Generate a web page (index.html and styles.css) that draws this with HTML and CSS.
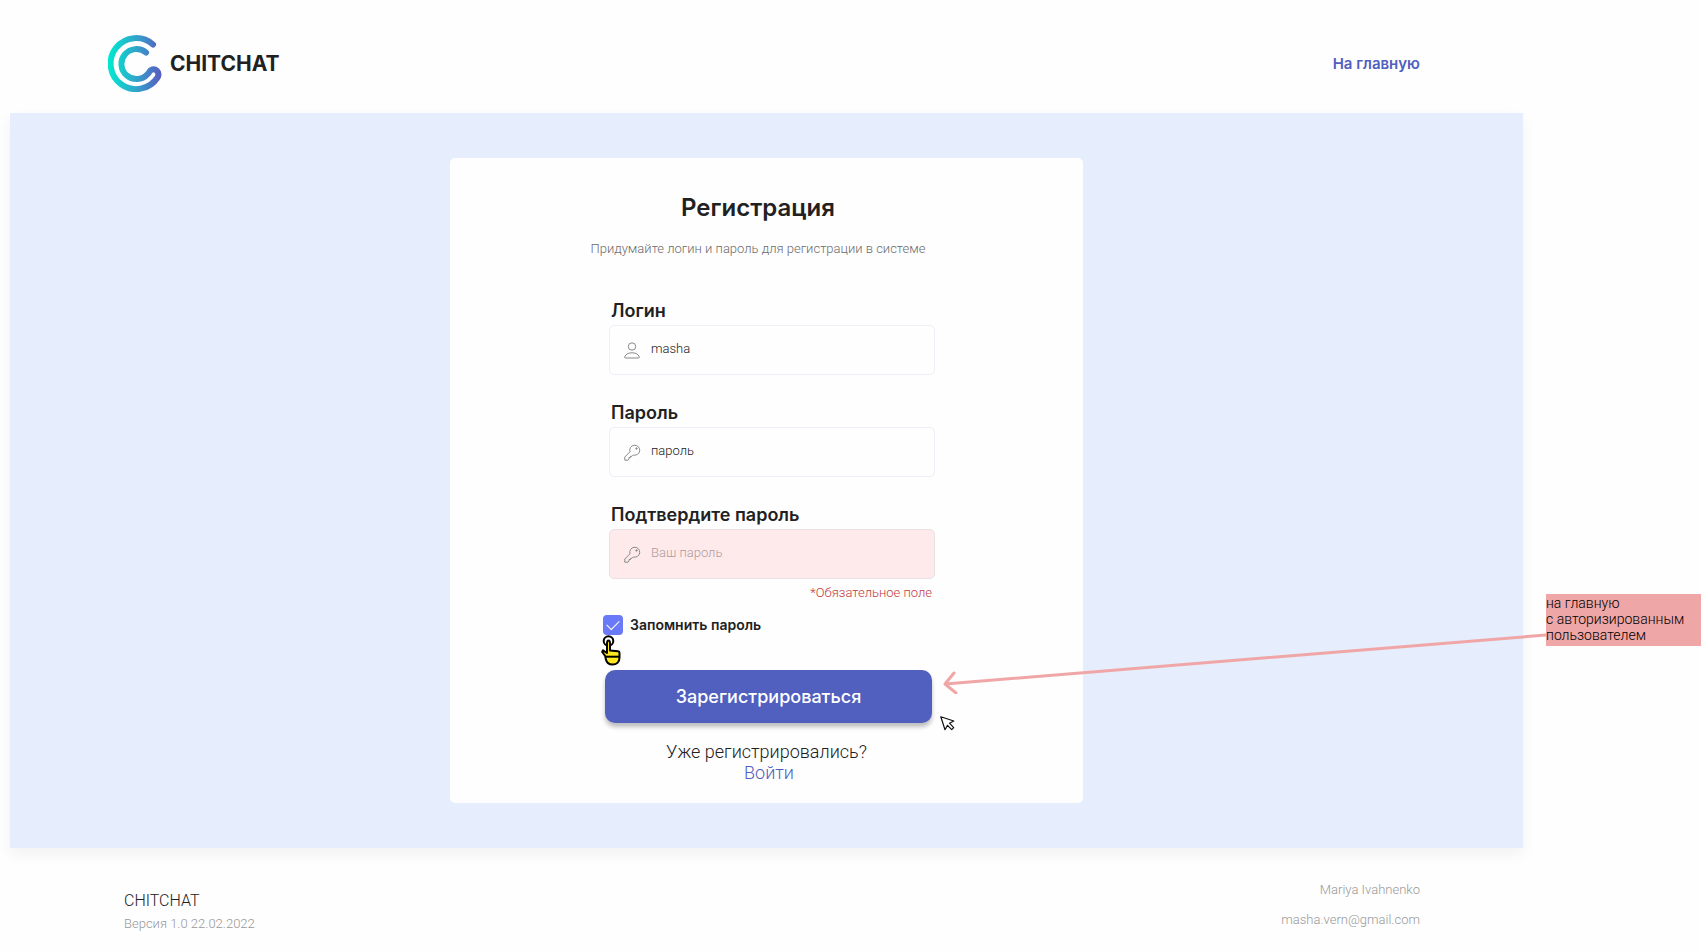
FILE: index.html
```
<!DOCTYPE html>
<html lang="ru">
<head>
<meta charset="utf-8">
<meta name="viewport" content="width=device-width, initial-scale=1">
<title>CHITCHAT — Регистрация</title>
<link rel="stylesheet" href="styles.css">
</head>
<body>
<div class="page">
  <header class="header">
    <div class="brand">
      <svg class="brand-logo" width="54" height="57" viewBox="0 0 54 57" fill="none" aria-hidden="true">
        <defs>
          <linearGradient id="logo-gradient" gradientUnits="userSpaceOnUse" x1="0" y1="28" x2="54" y2="28">
            <stop offset="0" stop-color="#00ead0"/>
            <stop offset="0.5" stop-color="#2fa8cb"/>
            <stop offset="1" stop-color="#5a58c0"/>
          </linearGradient>
        </defs>
        <path d="M45 9.500A25.500 25.500 0 1 0 49.500 42.500C52.500 37 47 32.500 42.800 35.200C41.500 36.200 41 37.800 39.500 39.200A15 15 0 1 1 38 17.500" stroke="url(#logo-gradient)" stroke-width="6" stroke-linecap="round" stroke-linejoin="round"/>
      </svg>
      <span class="brand-name">CHITCHAT</span>
    </div>
    <nav><a class="nav-link" href="#">На главную</a></nav>
  </header>

  <main class="main">
    <section class="card">
      <div class="intro">
        <h1 class="title">Регистрация</h1>
        <p class="subtitle">Придумайте логин и пароль для регистрации в системе</p>
      </div>
      <form class="form">
        <div class="field">
          <label class="label" for="login">Логин</label>
          <div class="control">
            <svg class="field-icon" width="16" height="17" viewBox="0 0 16 17" fill="none" stroke="currentColor" aria-hidden="true">
              <circle cx="8" cy="4.500" r="3.700"/>
              <path d="M1.500 16H14.500Q15.500 16 15.300 15C14.500 12 11.500 10.800 8 10.800S1.500 12 0.700 15Q0.500 16 1.500 16Z"/>
            </svg>
            <input class="input" id="login" type="text" value="masha">
          </div>
        </div>
        <div class="field">
          <label class="label" for="password">Пароль</label>
          <div class="control">
            <svg class="field-icon" width="17" height="17" viewBox="0 0 17 17" fill="none" stroke="currentColor" stroke-linejoin="round" aria-hidden="true">
              <path d="M6 7.800A5 5 0 1 1 9.300 11L8 12.300H6.500V13.500H5V15L4 16.200H.8V13Z"/>
              <circle cx="12.500" cy="4.500" r=".7" fill="currentColor"/>
            </svg>
            <input class="input" id="password" type="text" value="пароль">
          </div>
        </div>
        <div class="field">
          <label class="label" for="confirm">Подтвердите пароль</label>
          <div class="control">
            <svg class="field-icon" width="17" height="17" viewBox="0 0 17 17" fill="none" stroke="currentColor" stroke-linejoin="round" aria-hidden="true">
              <path d="M6 7.800A5 5 0 1 1 9.300 11L8 12.300H6.500V13.500H5V15L4 16.200H.8V13Z"/>
              <circle cx="12.500" cy="4.500" r=".7" fill="currentColor"/>
            </svg>
            <input class="input input-error" id="confirm" type="password" placeholder="Ваш пароль" aria-describedby="confirm-error">
          </div>
        </div>
        <p class="error" id="confirm-error">*Обязательное поле</p>

        <div class="remember">
          <input class="checkbox" id="remember" type="checkbox" checked>
          <label class="remember-label" for="remember">Запомнить пароль</label>
          <svg class="hand" width="21" height="31" viewBox="0 0 21 31" fill="none" stroke="#000" stroke-width="2" stroke-linejoin="round" aria-hidden="true">
            <circle cx="7.500" cy="6" r="4.800" fill="#fff"/>
            <path d="M6 8.500Q6 5.500 7.500 5.500T9 8.500V15.500L17 16.200Q18.500 16.300 18.500 18V22.500C18.500 27 15.500 29.500 11.500 29.500C8 29.500 5.500 27.500 4.800 24L4.200 21L1.200 17L2 15.300L6 18Z" fill="#ffe81f"/>
            <path d="M4.500 21.700H18.500"/>
          </svg>
        </div>

        <div class="submit-row">
          <button class="submit" type="submit">Зарегистрироваться</button>
          <svg class="pointer" width="15" height="15" viewBox="0 0 15 15" fill="#fff" stroke="#111" stroke-width="1.200" stroke-linejoin="round" aria-hidden="true">
            <path d="M.8.8L13.800 5L9.500 7.200L13.700 11.700L11.700 13.700L7.500 9.300L5 13.700Z"/>
          </svg>
        </div>
      </form>
      <p class="login-hint">Уже регистрировались?</p>
      <p class="login-action"><a class="login-link" href="#">Войти</a></p>
    </section>
  </main>

  <footer class="footer">
    <div class="about">
      <span class="product">CHITCHAT</span>
      <span>Версия 1.0 22.02.2022</span>
    </div>
    <address class="contacts">
      <span>Mariya Ivahnenko</span>
      <a class="mail" href="mailto:masha.vern@gmail.com">masha.vern@gmail.com</a>
    </address>
  </footer>
</div>

<aside class="notes">
  <div class="note">
    <svg class="arrow" width="603" height="66" viewBox="0 0 603 66" fill="none" stroke="#f0a6a6" stroke-width="3" stroke-linecap="round" stroke-linejoin="round" aria-hidden="true">
      <path d="M603 7L2 56M11 45L2 56L13 65"/>
    </svg>
    на главную<br>с авторизированным<br>пользователем
  </div>
</aside>
</body>
</html>
```
FILE: styles.css
```
* {
  box-sizing: border-box;
}

body {
  display: flex;
  min-height: 100vh;
  margin: 0;
  padding-left: 10px;
  background: #fefefe;
  color: #212121;
  font-family: Roboto, "Liberation Sans", sans-serif;
  font-size: 13px;
  font-weight: 300;
  line-height: 16px;
}

h1,
p {
  margin: 0;
}

a {
  text-decoration: none;
}

.page {
  flex: 1;
  min-width: 0;
}

.header {
  display: flex;
  align-items: center;
  justify-content: space-between;
  padding: 35px 103px 21px 98px;
}

.brand {
  display: flex;
  align-items: center;
  gap: 8px;
}

.brand-logo {
  display: block;
}

.brand-name {
  font-family: Inter, sans-serif;
  font-size: 21px;
  font-weight: 700;
  line-height: 24px;
}

.nav-link {
  display: block;
  padding-top: 1px;
  color: #515fbf;
  font-family: Inter, sans-serif;
  font-size: 15px;
  font-weight: 600;
}

.main {
  display: flex;
  justify-content: center;
  padding: 45px 0;
  background: #e6edfd;
  box-shadow: 0 6px 14px rgba(0, 0, 0, 0.05);
}

.card {
  width: 100%;
  max-width: 633px;
  padding: 36px 0 20px;
  border-radius: 5px;
  background: #fefefe;
}

.intro {
  display: grid;
  gap: 19px;
  padding-right: 17px;
  text-align: center;
}

.title {
  font-family: Inter, sans-serif;
  font-size: 24px;
  font-weight: 600;
  line-height: 28px;
}

.subtitle {
  color: #6c6c6c;
}

.form {
  display: grid;
  padding: 44px 148px 0 153px;
}

.field {
  display: grid;
  gap: 4px;
  padding-left: 6px;
}

.field + .field {
  margin-top: 28px;
}

.label {
  padding-left: 2px;
  font-family: Inter, sans-serif;
  font-size: 18px;
  font-weight: 600;
  line-height: 20px;
}

.control {
  position: relative;
}

.field-icon {
  position: absolute;
  top: 17px;
  left: 15px;
  color: #888;
}

.input {
  display: block;
  width: 100%;
  height: 50px;
  padding: 0 16px 4px 41px;
  border: 1px solid #eceff5;
  border-radius: 5px;
  background: transparent;
  color: #212121;
  font: inherit;
}

.input::placeholder {
  color: #b09a9b;
  opacity: 1;
}

.input-error {
  border-color: #eadfe3;
  background: #ffeaeb;
}

.control:has(.input-error) .field-icon {
  z-index: 1;
}

.error {
  margin-top: 6px;
  padding-right: 3px;
  color: #c23b3f;
  text-align: right;
}

.remember {
  position: relative;
  display: flex;
  align-items: center;
  gap: 7px;
  margin-top: 14px;
}

.checkbox {
  display: grid;
  place-items: center;
  width: 20px;
  height: 20px;
  margin: 0;
  border-radius: 4px;
  appearance: none;
  background: #6979f8;
}

.checkbox:checked::before {
  width: 11px;
  height: 6px;
  margin-bottom: 3px;
  border-bottom: 1px solid #fff;
  border-left: 1px solid #fff;
  content: "";
  rotate: -45deg;
}

.remember-label {
  font-family: Inter, sans-serif;
  font-size: 14px;
  font-weight: 600;
}

.hand {
  position: absolute;
  top: 20px;
  left: -2px;
}

.submit-row {
  position: relative;
  margin: 35px 3px 0 2px;
}

.submit {
  display: block;
  width: 100%;
  height: 53px;
  padding: 0;
  border: 0;
  border-radius: 10px;
  background: #515fbf;
  box-shadow: 0 4px 4px rgba(0, 0, 0, 0.25);
  color: #fff;
  font-family: Inter, sans-serif;
  font-size: 18px;
  font-weight: 500;
}

.pointer {
  position: absolute;
  top: 46px;
  left: 100%;
  margin-left: 8px;
}

.login-hint,
.login-action {
  font-size: 18px;
  line-height: 21px;
  text-align: center;
}

.login-hint {
  padding-top: 18px;
}

.login-action {
  padding-left: 5px;
}

.login-link {
  color: #515fbf;
}

.footer {
  display: flex;
  justify-content: space-between;
  padding: 32px 103px 16px 114px;
  color: #999;
  line-height: 20px;
}

.about {
  display: grid;
  align-content: start;
  gap: 3px;
  padding-top: 11px;
}

.product {
  color: #212121;
  font-size: 16px;
}

.contacts {
  display: grid;
  align-content: start;
  gap: 10px;
  font-style: normal;
  text-align: right;
}

.mail {
  color: inherit;
}

.notes {
  width: 178px;
  padding: 594px 0 0 23px;
}

.note {
  position: relative;
  padding: 1px 0 3px;
  background: #eea6a6;
  color: #000;
  font-size: 14px;
  line-height: 16px;
}

.arrow {
  position: absolute;
  top: 34px;
  right: 100%;
}
```
